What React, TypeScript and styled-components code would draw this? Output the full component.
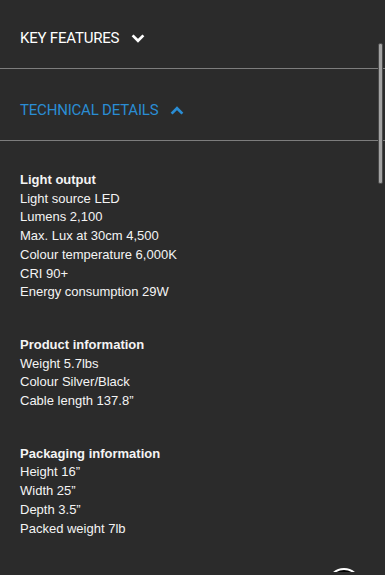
import React from "react";
import styled, { createGlobalStyle } from "styled-components";

const Global = createGlobalStyle`
  html, body { margin: 0; padding: 0; background: #2b2b2b; }
  body { overflow: hidden; }
`;

const Page = styled.div`
  position: relative;
  width: 385px;
  height: 575px;
  overflow: hidden;
  background: #2b2b2b;
  margin-top: -3px;
`;

const Item = styled.section`
  border-bottom: 1px solid #7d7d7d;
`;

const Header = styled.div<{ $active?: boolean }>`
  display: flex;
  align-items: center;
  height: 20px;
  padding: 31px 20px 20px;
  font-family: Roboto, "Liberation Sans", sans-serif;
  font-size: 15px;
  line-height: 20px;
  letter-spacing: -0.2px;
  color: ${(p) => (p.$active ? "#2a8dd4" : "#ffffff")};
  text-transform: uppercase;
`;

const Chevron = styled.svg`
  width: 14px;
  height: 9px;
  margin-left: 12px;
  flex: none;
`;

const Content = styled.div`
  display: flex;
  flex-direction: column;
  gap: 34px;
  padding: 30px 20px 40px;
  font-family: "Liberation Sans", Arial, sans-serif;
  font-size: 13px;
  line-height: 18.7px;
  color: #f4f4f4;
`;

const Group = styled.div`
  display: flex;
  flex-direction: column;
`;

const GroupTitle = styled.div`
  font-weight: 700;
`;

const Row = styled.div``;

const ScrollThumb = styled.div`
  position: absolute;
  left: 378px;
  top: 46px;
  width: 3px;
  height: 139px;
  border-radius: 2px;
  background: #a3a3a3;
  border: 1px solid #4a4a4a;
`;

const FloatButton = styled.div`
  position: absolute;
  left: 327px;
  top: 571px;
  width: 30px;
  height: 30px;
  border-radius: 50%;
  background: #000;
  border: 2px solid #fff;
`;

const groups = [
  {
    title: "Light output",
    rows: [
      "Light source LED",
      "Lumens 2,100",
      "Max. Lux at 30cm 4,500",
      "Colour temperature 6,000K",
      "CRI 90+",
      "Energy consumption 29W",
    ],
  },
  {
    title: "Product information",
    rows: ["Weight 5.7lbs", "Colour Silver/Black", "Cable length 137.8\u201d"],
  },
  {
    title: "Packaging information",
    rows: ["Height 16\u201d", "Width 25\u201d", "Depth 3.5\u201d", "Packed weight 7lb"],
  },
];

const ChevronIcon = ({ up, color }: { up?: boolean; color: string }) => (
  <Chevron viewBox="0 0 14 9">
    <path
      d={up ? "M1.6 7.6 L7 2.2 L12.4 7.6" : "M1.6 1.4 L7 6.8 L12.4 1.4"}
      fill="none"
      stroke={color}
      strokeWidth="2.7"
    />
  </Chevron>
);

export default function App() {
  return (
    <Page>
      <Global />
      <Item>
        <Header>
          Key Features
          <ChevronIcon color="#ffffff" />
        </Header>
      </Item>
      <Item>
        <Header $active>
          Technical Details
          <ChevronIcon up color="#2a8dd4" />
        </Header>
      </Item>
      <Content>
        {groups.map((g) => (
          <Group key={g.title}>
            <GroupTitle>{g.title}</GroupTitle>
            {g.rows.map((r) => (
              <Row key={r}>{r}</Row>
            ))}
          </Group>
        ))}
      </Content>
      <ScrollThumb />
      <FloatButton />
    </Page>
  );
}
